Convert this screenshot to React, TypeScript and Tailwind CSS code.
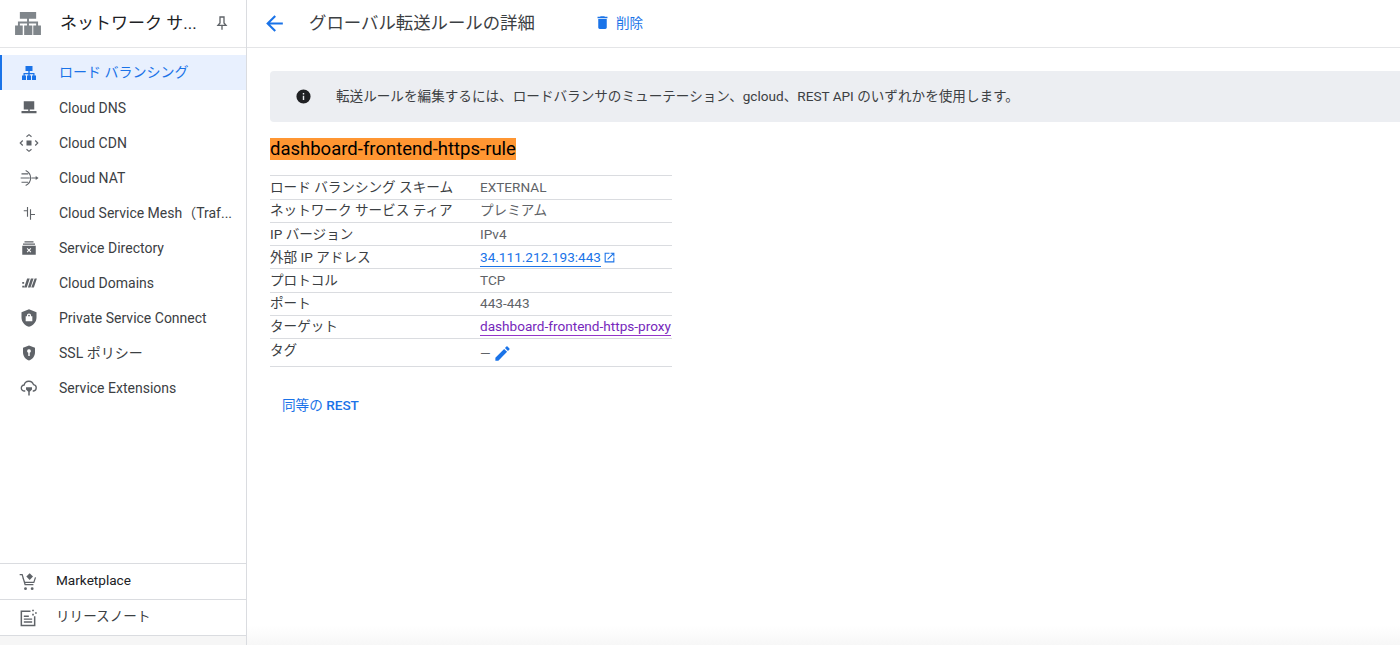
import { ReactNode } from "react"

const font = "font-['Roboto','Noto_Sans_CJK_JP',sans-serif]"

function Svg({ children, className = "" }: { children: ReactNode; className?: string }) {
  return (
    <svg viewBox="0 0 24 24" className={`w-[18px] h-[18px] ${className}`} fill="currentColor">
      {children}
    </svg>
  )
}

const LbIcon = () => (
  <svg viewBox="0 0 14 14" className="h-[14px] w-[14px]" fill="currentColor">
    <path d="M3.500 0h7v5H7.700v2h4.800v2.500H14V14H10V9.500h1.300V8.300H7.700v1.200H9V14H5V9.500h1.300V8.300H2.700v1.200H4V14H0V9.500h1.500V7h4.800V5H3.500z" />
  </svg>
)
const DnsIcon = () => (
  <Svg>
    <path d="M5 3h14v11h-6v2h9v3H2v-3h9v-2H5z" />
  </Svg>
)
const CdnIcon = () => (
  <Svg className="w-[20px] h-[20px]">
    <rect x="9" y="9" width="6" height="6" />
    <path d="M9 4.500l3-2.500 3 2.500M9 19.500l3 2.500 3-2.500M4.500 9L1.500 12l3 3M19.500 9l3 3-3 3" fill="none" stroke="currentColor" strokeWidth="1.400" />
  </Svg>
)
const NatIcon = () => (
  <Svg className="w-[20px] h-[20px]">
    <path d="M8 3c4 2 6 5 6 9s-2 7-6 9M3 7h8M2 12h11M3 17h8M15 12h6" fill="none" stroke="currentColor" strokeWidth="1.300" />
    <path d="M20 9.500l3.500 2.500-3.500 2.500z" />
  </Svg>
)
const MeshIcon = () => (
  <Svg>
    <path d="M10 4v13M14 7v14M5 9h5M14 14h6" fill="none" stroke="currentColor" strokeWidth="1.500" />
  </Svg>
)
const DirectoryIcon = () => (
  <Svg>
    <path d="M6 3h12v1.500H6zM4 6h16v1.500H4zM3 9h18v12H3zM10 12l2 2 2-2 1 1-2 2 2 2-1 1-2-2-2 2-1-1 2-2-2-2z" fillRule="evenodd" />
  </Svg>
)
const DomainsIcon = () => (
  <Svg>
    <path d="M3 10.500h2.500V13H3zM3 15.500h2.500V18H3zM9.500 6h3.500l-4 12H5.500zM14.500 6h3.500l-4 12h-3.500zM19.500 6h3l-4 12h-3.500z" />
  </Svg>
)
const PscIcon = () => (
  <Svg className="w-[20px] h-[20px]">
    <path
      d="M12 1.500L3 5v6.500c0 5.300 3.800 9.800 9 11 5.200-1.200 9-5.700 9-11V5zM9.500 10V9a2.500 2.500 0 015 0v1H16v6H8v-6zM11 10h2V9a1 1 0 00-2 0z"
      fillRule="evenodd"
    />
  </Svg>
)
const SslIcon = () => (
  <Svg>
    <path d="M12 2L4 5v6c0 5 3.400 9.700 8 11 4.600-1.300 8-6 8-11V5zM12 7a2.500 2.500 0 011 4.800V16h-2v-4.200A2.500 2.500 0 0112 7z" fillRule="evenodd" />
  </Svg>
)
const ExtIcon = () => (
  <Svg>
    <path
      d="M7 16H6a4 4 0 01-.500-8A6.500 6.500 0 0118 7.500a4.300 4.300 0 010 8.500h-1"
      fill="none"
      stroke="currentColor"
      strokeWidth="1.800"
    />
    <path d="M8 11h8v3l-3 3v5h-2v-5l-3-3z" />
  </Svg>
)
const CartIcon = () => (
  <Svg className="w-[20px] h-[20px]">
    <path d="M2 3h3l3.500 12h10M5.800 6.500L8 12.500h11l2-6" fill="none" stroke="currentColor" strokeWidth="1.500" />
    <circle cx="9" cy="20" r="1.700" />
    <circle cx="17" cy="20" r="1.700" />
    <path d="M14 1.500l4 4-4 4-4-4z" />
  </Svg>
)
const NotesIcon = () => (
  <Svg className="w-[20px] h-[20px]">
    <path d="M15 4H4v17h16V10" fill="none" stroke="currentColor" strokeWidth="1.800" />
    <path d="M7 9h6v1.700H7zM7 12.500h10v1.700H7zM7 16h10v1.700H7zM17 2h2v2h-2zM20.500 5h2v2h-2zM17 7h2v2h-2z" />
  </Svg>
)

const navItems: { label: string; icon: ReactNode; active?: boolean }[] = [
  { label: "ロード バランシング", icon: <LbIcon />, active: true },
  { label: "Cloud DNS", icon: <DnsIcon /> },
  { label: "Cloud CDN", icon: <CdnIcon /> },
  { label: "Cloud NAT", icon: <NatIcon /> },
  { label: "Cloud Service Mesh（Traf...", icon: <MeshIcon /> },
  { label: "Service Directory", icon: <DirectoryIcon /> },
  { label: "Cloud Domains", icon: <DomainsIcon /> },
  { label: "Private Service Connect", icon: <PscIcon /> },
  { label: "SSL ポリシー", icon: <SslIcon /> },
  { label: "Service Extensions", icon: <ExtIcon /> },
]

const rows: { label: string; value: ReactNode; h: string }[] = [
  { label: "ロード バランシング スキーム", value: "EXTERNAL", h: "h-[23.500px]" },
  { label: "ネットワーク サービス ティア", value: "プレミアム", h: "h-[23.500px]" },
  { label: "IP バージョン", value: "IPv4", h: "h-[23px]" },
  {
    label: "外部 IP アドレス",
    value: (
      <span className="flex items-center text-[#1a73e8]">
        <span className="border-b border-[#1a73e8] leading-[18px]">34.111.212.193:443</span>
        <svg viewBox="0 0 24 24" className="w-[13px] h-[13px] ml-[2px]" fill="currentColor">
          <path d="M19 19H5V5h7V3H3v18h18v-9h-2zM14 3v2h3.600l-9.800 9.800 1.400 1.400L19 6.400V10h2V3z" />
        </svg>
      </span>
    ),
    h: "h-[23px]",
  },
  { label: "プロトコル", value: "TCP", h: "h-[23.500px]" },
  { label: "ポート", value: "443-443", h: "h-[23px]" },
  {
    label: "ターゲット",
    value: <span className="mt-[1px] block border-b border-[#9334c9] text-[#7627bb] leading-[17px]">dashboard-frontend-https-proxy</span>,
    h: "h-[23.500px]",
  },
  {
    label: "タグ",
    value: (
      <span className="mt-[3px] flex items-center">
        <span>—</span>
        <svg viewBox="0 0 24 24" className="ml-[2px] h-[19px] w-[19px] text-[#1a73e8]" fill="currentColor">
          <path d="M3 17.250V21h3.750L17.810 9.940l-3.750-3.750zM20.710 7.040a1 1 0 000-1.410l-2.340-2.340a1 1 0 00-1.410 0l-1.830 1.830 3.750 3.750z" />
        </svg>
      </span>
    ),
    h: "h-[27.500px]",
  },
]

export default function App() {
  return (
    <div className={`flex h-[645px] w-[1400px] overflow-hidden bg-white text-[13.600px] text-[#3c4043] ${font}`}>
      <aside className="relative flex w-[247px] shrink-0 flex-col border-r border-[#dadce0]">
        <div className="flex h-[48px] shrink-0 items-center border-b border-[#e4e5e7] pl-[15px]">
          <svg viewBox="0 0 27 24" className="mb-[1px] h-[23px] w-[26px] text-[#80868b]" fill="currentColor">
            <path d="M5 0h17v7h-7.500v3H24v4h3v10h-8V14h3v-2h-7.500v2H18v10H9.500V14h3v-2H5v2h3v10H0V14h3v-4h9.500V7H5z" />
          </svg>
          <span className="ml-[19px] w-[154px] whitespace-nowrap text-[17px] text-[#202124]">ネットワーク サ...</span>
          <svg viewBox="0 0 24 24" className="mb-[1px] h-[16px] w-[16px] text-[#5f6368]" fill="none" stroke="currentColor" strokeWidth="2">
            <path d="M8 3h8M9 3v9l-3 3.500h12L15 12V3M12 15.500V22" />
          </svg>
        </div>
        <nav className="flex flex-col pt-[7px]">
          {navItems.map((item) => (
            <div
              key={item.label}
              className={`flex h-[35px] items-center whitespace-nowrap border-l-2 text-[14px] ${
                item.active ? "border-[#1a73e8] bg-[#e8f0fe] text-[#1a73e8]" : "border-transparent text-[#3c4043]"
              }`}
            >
              <span className={`mr-[4px] flex w-[53px] justify-center ${item.active ? "text-[#1a73e8]" : "text-[#5f6368]"}`}>
                {item.icon}
              </span>
              <span className={item.active ? "" : "mt-[1px]"}>{item.label}</span>
            </div>
          ))}
        </nav>
        <div className="mt-auto flex flex-col">
          <div className="flex h-[36px] items-center border-t border-[#dadce0]">
            <span className="flex w-[56px] justify-center text-[#5f6368]">
              <CartIcon />
            </span>
            <span className="mb-[2px] text-[#202124]">Marketplace</span>
          </div>
          <div className="flex h-[36px] items-center border-t border-[#dadce0]">
            <span className="flex w-[56px] justify-center text-[#5f6368]">
              <NotesIcon />
            </span>
            <span className="mb-[2px]">リリースノート</span>
          </div>
          <div className="h-[10px] border-t border-[#dadce0] bg-[#f6f6f6]" />
        </div>
      </aside>

      <main className="flex min-w-0 flex-1 flex-col bg-gradient-to-b from-white from-[97%] to-[#f7f7f7]">
        <header className="flex h-[48px] shrink-0 items-center border-b border-[#e4e5e7] pl-[15px]">
          <svg viewBox="0 0 24 24" className="h-[25px] w-[25px] text-[#1a73e8]" fill="currentColor">
            <path d="M20 11H7.830l5.590-5.590L12 4l-8 8 8 8 1.410-1.410L7.830 13H20z" />
          </svg>
          <h1 className="ml-[22px] mb-[1px] text-[17.400px] text-[#3c4043]">グローバル転送ルールの詳細</h1>
          <div className="ml-[59px] mb-[1px] flex items-center text-[#1a73e8]">
            <svg viewBox="0 0 24 24" className="h-[17px] w-[17px]" fill="currentColor">
              <path d="M6 19c0 1.100.9 2 2 2h8c1.100 0 2-.9 2-2V7H6zM19 4h-3.500l-1-1h-5l-1 1H5v2h14z" />
            </svg>
            <span className="ml-[5px]">削除</span>
          </div>
        </header>

        <div className="flex flex-col pl-[23px] pt-[23px]">
          <div className="flex h-[51px] items-center rounded-l-[4px] bg-[#eceef2] pl-[25px] text-[#3c4043]">
            <svg viewBox="0 0 24 24" className="mb-[1px] h-[17px] w-[17px] text-[#202124]" fill="currentColor">
              <path d="M12 2a10 10 0 100 20 10 10 0 000-20zm1 15h-2v-6h2zm0-8h-2V7h2z" />
            </svg>
            <span className="mb-[1px] ml-[24px]">転送ルールを編集するには、ロードバランサのミューテーション、gcloud、REST API のいずれかを使用します。</span>
          </div>

          <div className="mt-[16px] self-start bg-[#ff9632] text-[18.500px] leading-[22px] text-black">dashboard-frontend-https-rule</div>

          <div className="mt-[15px] w-[402px] border-t border-[#dadce0]">
            {rows.map((row) => (
              <div key={row.label} className={`flex ${row.h} items-start border-b border-[#dadce0] pt-[1.500px] leading-[19px]`}>
                <div className="w-[210px] text-[#3c4043]">{row.label}</div>
                <div className="whitespace-nowrap text-[#5f6368]">{row.value}</div>
              </div>
            ))}
          </div>

          <div className="mt-[28px] pl-[12px] text-[#1a73e8]">
            同等の <span className="font-medium">REST</span>
          </div>
        </div>
      </main>
    </div>
  )
}
